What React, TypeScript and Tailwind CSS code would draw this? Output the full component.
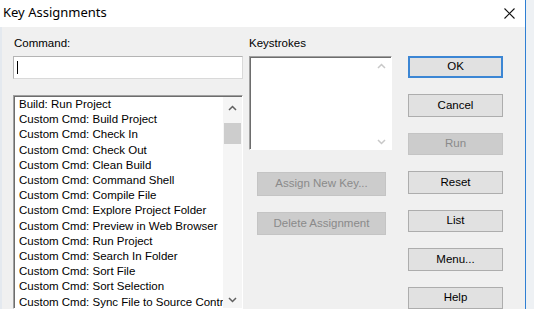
import React from "react";

const items = [
  "Build: Run Project",
  "Custom Cmd: Build Project",
  "Custom Cmd: Check In",
  "Custom Cmd: Check Out",
  "Custom Cmd: Clean Build",
  "Custom Cmd: Command Shell",
  "Custom Cmd: Compile File",
  "Custom Cmd: Explore Project Folder",
  "Custom Cmd: Preview in Web Browser",
  "Custom Cmd: Run Project",
  "Custom Cmd: Search In Folder",
  "Custom Cmd: Sort File",
  "Custom Cmd: Sort Selection",
  "Custom Cmd: Sync File to Source Control",
];

function Chevron({ up, color }: { up: boolean; color: string }) {
  return (
    <svg width="9" height="6" viewBox="0 0 9 6">
      <path
        d={up ? "M1 5 L4.5 1.5 L8 5" : "M1 1 L4.5 4.5 L8 1"}
        fill="none"
        stroke={color}
        strokeWidth="1.5"
      />
    </svg>
  );
}

function Btn({
  children,
  kind = "normal",
  className = "",
}: {
  children: React.ReactNode;
  kind?: "normal" | "default" | "disabled";
  className?: string;
}) {
  const base = "h-[23px] flex items-center justify-center text-[11.5px] leading-none";
  const style =
    kind === "default"
      ? "bg-[#e1e1e1] border-2 border-[#3c86d4] text-black"
      : kind === "disabled"
      ? "bg-[#cccccc] border border-[#c4c4c4] text-[#8a8a8a]"
      : "bg-[#e1e1e1] border border-[#adadad] text-black";
  return <div className={`${base} ${style} ${className}`}>{children}</div>;
}

export default function App() {
  return (
    <div
      className="w-[534px] h-[309px] overflow-hidden flex bg-[#eef1f4]"
      style={{ fontFamily: '"Liberation Sans", Arial, sans-serif' }}
    >
      <div className="w-[526px] flex flex-col border-r border-[#2f7fd3]">
        {/* title bar */}
        <div className="h-[27px] bg-white flex items-center justify-between pl-[3px] pr-[10px] shrink-0">
          <span
            className="text-[13px] text-black leading-none -mt-[2px]"
            style={{ fontFamily: '"Noto Sans", "Open Sans", sans-serif' }}
          >
            Key Assignments
          </span>
          <svg width="11" height="11" viewBox="0 0 11 11">
            <path d="M0.5 0.5 L10.5 10.5 M10.5 0.5 L0.5 10.5" stroke="#111" strokeWidth="1.1" />
          </svg>
        </div>

        {/* body */}
        <div className="flex-1 bg-[#f0f0f0] flex pl-[11px] pt-[9px] border-l-2 border-[#e4e9ef] min-h-0">
          {/* left column */}
          <div className="w-[230px] flex flex-col min-h-0">
            <div className="h-[20px] text-[11.5px] leading-[14px] text-black pl-[1px]">Command:</div>
            <div className="h-[23px] bg-white border border-[#b4b4b4] border-b-[#d9d9d9] border-r-[#d9d9d9] flex items-center pl-[3px] shrink-0">
              <div className="w-[1px] h-[13px] bg-black" />
            </div>
            <div className="mt-[16px] flex-1 min-h-0 flex bg-white border border-[#a0a0a0] border-r-white border-b-white shadow-[inset_1px_1px_0_#6d6d6d] pl-[1px] pt-[1px] overflow-hidden">
              <div className="flex-1 overflow-hidden pl-[4px]">
                {items.map((t) => (
                  <div
                    key={t}
                    className="text-[11.5px] leading-[15.2px] text-black whitespace-nowrap"
                  >
                    {t}
                  </div>
                ))}
              </div>
              <div className="w-[19px] bg-[#f5f5f5] flex flex-col items-center shrink-0">
                <div className="h-[17px] flex items-center justify-center mt-[2px]">
                  <Chevron up color="#606060" />
                </div>
                <div className="mt-[7px] w-[17px] h-[21px] bg-[#cdcdcd]" />
                <div className="flex-1" />
                <div className="h-[17px] flex items-center justify-center">
                  <Chevron up={false} color="#606060" />
                </div>
              </div>
            </div>
          </div>

          {/* middle column */}
          <div className="w-[143px] ml-[6px] flex flex-col">
            <div className="h-[20px] text-[11.5px] leading-[14px] text-black">Keystrokes</div>
            <div className="h-[94px] flex bg-white border border-[#a0a0a0] border-r-white border-b-white shadow-[inset_1px_1px_0_#6d6d6d]">
              <div className="flex-1" />
              <div className="w-[19px] flex flex-col items-center justify-between pt-[6px] pb-[4px]">
                <Chevron up color="#c8c8c8" />
                <Chevron up={false} color="#c8c8c8" />
              </div>
            </div>
            <Btn kind="disabled" className="mt-[22px] ml-[8px] w-[129px] h-[24px]">
              Assign New Key...
            </Btn>
            <Btn kind="disabled" className="mt-[16px] ml-[8px] w-[129px]">
              Delete Assignment
            </Btn>
          </div>

          {/* right column */}
          <div className="w-[95px] ml-[16px] flex flex-col gap-[16px] pt-[20px]">
            <Btn kind="default">OK</Btn>
            <Btn>Cancel</Btn>
            <Btn kind="disabled">Run</Btn>
            <Btn>Reset</Btn>
            <Btn>List</Btn>
            <Btn>Menu...</Btn>
            <Btn>Help</Btn>
          </div>
        </div>
      </div>
    </div>
  );
}
